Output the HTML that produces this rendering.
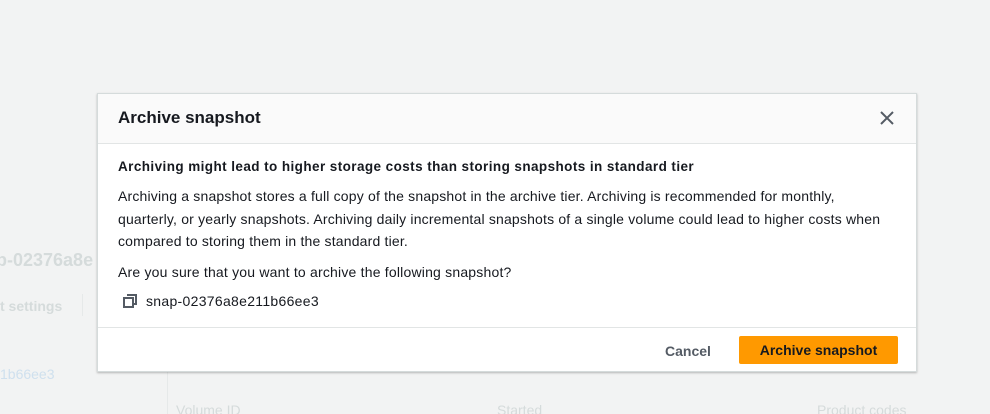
<!DOCTYPE html>
<html><head><meta charset="utf-8"><style>
html,body{margin:0;padding:0;width:990px;height:414px;overflow:hidden;background:#f2f3f3;font-family:"Liberation Sans",Arial,sans-serif;color:#16191f;position:relative}
.bg{position:absolute;color:#d5dbdb;font-size:14px}
.modal{position:absolute;left:97px;top:93px;width:820px;height:279px;background:#fff;box-shadow:0 1px 2px rgba(0,0,0,.25);border:1px solid #d5dbdb;box-sizing:border-box}
.hd{height:49px;background:#fafafa;border-bottom:1px solid #e2e5e5;position:relative}
.hd h2{margin:0;position:absolute;left:20px;top:14px;font-size:17px;font-weight:bold;color:#16191f}
.x{position:absolute;right:22px;top:17px}
.body{padding:0 20px;font-size:14px;line-height:22px}
.b1{position:absolute;left:20px;top:62px;font-weight:bold;font-size:13.5px;letter-spacing:.42px;white-space:nowrap}
.p{position:absolute;left:20px;top:91px;width:800px;line-height:22.5px;letter-spacing:.18px;white-space:nowrap}
.q{position:absolute;left:20px;top:167px;letter-spacing:.2px}
.s{position:absolute;left:48px;top:196px;letter-spacing:.3px}
.ci{position:absolute;left:25px;top:200px}
.ft{position:absolute;left:0;right:0;top:233px;border-top:1px solid #e2e5e5}
.cancel{position:absolute;left:567px;top:249px;font-weight:bold;color:#545b64;font-size:14px}
.btn{position:absolute;left:641px;top:242px;width:159px;height:28px;background:#ff9900;border-radius:2px;font-weight:bold;font-size:14px;text-align:center;line-height:28px;color:#16191f}
</style></head><body>
<div class="bg" style="left:-4px;top:250px;font-size:18px;font-weight:bold">p-02376a8e</div>
<div class="bg" style="left:0;top:298px;font-weight:bold">t settings</div>
<div class="bg" style="left:82px;top:294px;width:1px;height:22px;background:#e6e9e9"></div>
<div class="bg" style="left:0;top:366px;color:#cfe0ee">1b66ee3</div>
<div class="bg" style="left:167px;top:360px;width:1px;height:60px;background:#e6e9e9"></div>
<div class="bg" style="left:176px;top:402px">Volume ID</div>
<div class="bg" style="left:497px;top:402px">Started</div>
<div class="bg" style="left:817px;top:402px">Product codes</div>
<div class="modal">
 <div class="hd"><h2>Archive snapshot</h2>
 <svg class="x" width="14" height="14" viewBox="0 0 14 14"><path d="M1 1L13 13M13 1L1 13" stroke="#545b64" stroke-width="2"/></svg></div>
 <div class="body">
  <div class="b1">Archiving might lead to higher storage costs than storing snapshots in standard tier</div>
  <div class="p">Archiving a snapshot stores a full copy of the snapshot in the archive tier. Archiving is recommended for monthly,<br>quarterly, or yearly snapshots. Archiving daily incremental snapshots of a single volume could lead to higher costs when<br>compared to storing them in the standard tier.</div>
  <div class="q">Are you sure that you want to archive the following snapshot?</div>
  <svg class="ci" width="14" height="14" viewBox="0 0 14 14"><path d="M4 1h9v9h-3" fill="none" stroke="#545b64" stroke-width="2"/><rect x="1" y="4" width="9" height="9" fill="none" stroke="#545b64" stroke-width="2"/></svg>
  <div class="s">snap-02376a8e211b66ee3</div>
 </div>
 <div class="ft"></div>
 <div class="cancel">Cancel</div>
 <div class="btn">Archive snapshot</div>
</div>
</body></html>
